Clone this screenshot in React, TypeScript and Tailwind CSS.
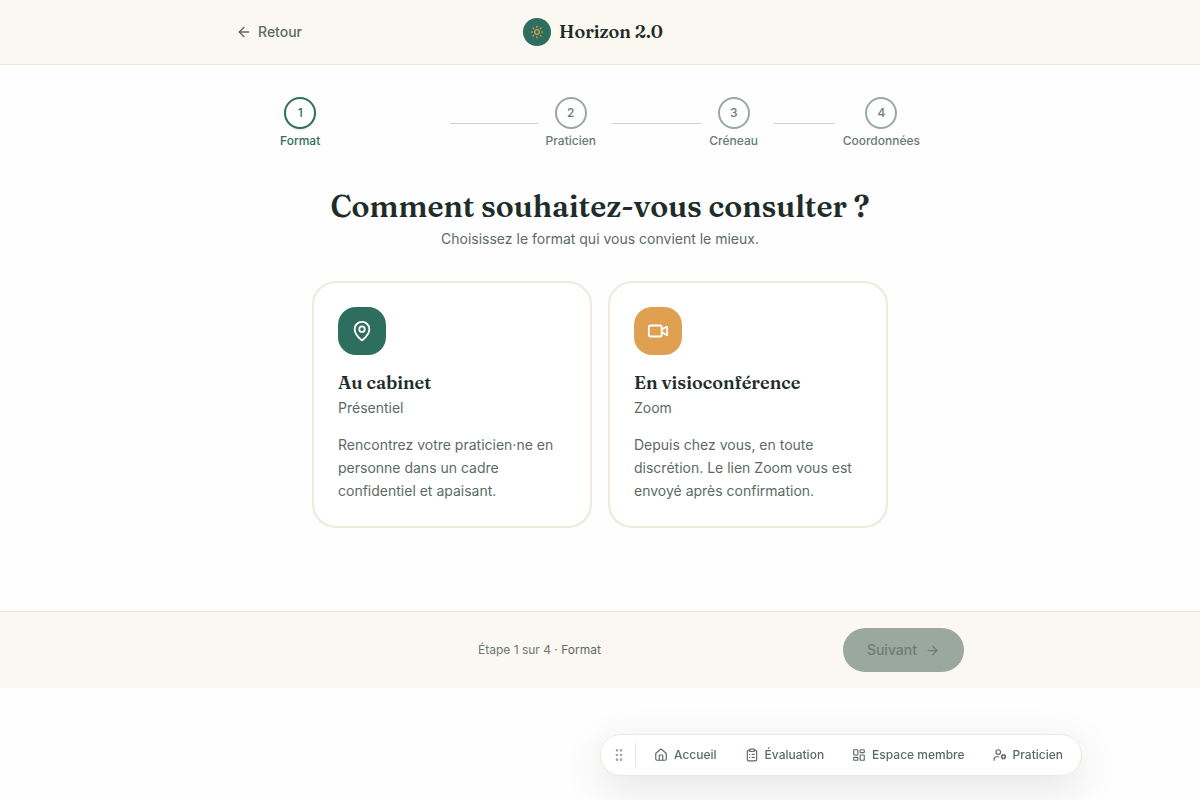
import {
  ArrowLeft,
  ArrowRight,
  ClipboardList,
  GripVertical,
  House,
  LayoutDashboard,
  MapPin,
  Sun,
  UserCog,
  Video,
} from "lucide-react";

const steps = ["Format", "Praticien", "Créneau", "Coordonnées"];

const formats = [
  {
    title: "Au cabinet",
    subtitle: "Présentiel",
    text: "Rencontrez votre praticien·ne en personne dans un cadre confidentiel et apaisant.",
    icon: MapPin,
    color: "bg-[#2d6e5e]",
  },
  {
    title: "En visioconférence",
    subtitle: "Zoom",
    text: "Depuis chez vous, en toute discrétion. Le lien Zoom vous est envoyé après confirmation.",
    icon: Video,
    color: "bg-[#e0a052]",
  },
];

const links = [
  { label: "Accueil", icon: House },
  { label: "Évaluation", icon: ClipboardList },
  { label: "Espace membre", icon: LayoutDashboard },
  { label: "Praticien", icon: UserCog },
];

const Header = () => (
  <header className="border-b border-[#efe6d6] bg-[#fbf8f1]">
    <div className="mx-auto flex h-16 max-w-3xl items-center justify-between px-5">
      <a
        href="#"
        className="flex items-center gap-1.5 text-sm font-medium text-[#5c6b64]"
      >
        <ArrowLeft size={16} />
        Retour
      </a>
      <div className="flex items-center gap-2">
        <span className="flex size-7 items-center justify-center rounded-full bg-[#2d6e5e] text-[#e0a052]">
          <Sun size={14} />
        </span>
        <span className="font-['Fraunces','Liberation_Serif',serif] text-lg font-semibold text-[#1f2d2a]">
          Horizon 2.0
        </span>
      </div>
      <span className="w-20" />
    </div>
  </header>
);

const Stepper = () => (
  <ol className="mx-auto flex max-w-2xl items-center gap-2 px-4 text-xs font-medium">
    {steps.map((step, i) => (
      <li key={step} className="flex flex-1 items-center">
        {i > 0 && <span className="mx-2 h-px flex-1 bg-[#cdd3c8]" />}
        <div
          className={
            i === 0
              ? "flex flex-col items-center gap-1 text-[#2d6e5e]"
              : "flex flex-col items-center gap-1 text-[#6b7a73]"
          }
        >
          <span
            className={
              i === 0
                ? "flex size-8 items-center justify-center rounded-full border-2 border-[#2d6e5e] bg-white shadow-sm"
                : "flex size-8 items-center justify-center rounded-full border-2 border-[#9aa8a0] bg-white"
            }
          >
            {i + 1}
          </span>
          <span>{step}</span>
        </div>
      </li>
    ))}
  </ol>
);

const FormatCards = () => (
  <div className="mx-auto mt-8 grid max-w-xl grid-cols-2 gap-4">
    {formats.map(({ title, subtitle, text, icon: Icon, color }) => (
      <button
        key={title}
        type="button"
        className="rounded-3xl border-2 border-[#efe9dc] bg-white p-6 text-left"
      >
        <span
          className={`flex size-12 items-center justify-center rounded-[18px] text-white ${color}`}
        >
          <Icon size={22} />
        </span>
        <h2 className="mt-4 font-['Fraunces','Liberation_Serif',serif] text-lg leading-[23px] font-semibold text-[#1f2d2a]">
          {title}
        </h2>
        <p className="mt-1 text-sm text-[#5c6b64]">{subtitle}</p>
        <p className="mt-4 text-sm leading-relaxed text-[#5c6b64]">{text}</p>
      </button>
    ))}
  </div>
);

const Footer = () => (
  <footer className="border-t border-[#e8e6dd] bg-[#fbf7f2]">
    <div className="mx-auto flex max-w-3xl items-center justify-between px-5 py-4">
      <span />
      <p className="text-xs text-[#6b7a73]">
        Étape 1 sur 4 · <span className="text-[#5c6b64]">Format</span>
      </p>
      <button
        type="button"
        disabled
        className="flex h-11 items-center gap-2 rounded-full bg-[#9aa89f] px-6 text-sm font-medium text-[#6b7d74]"
      >
        Suivant
        <ArrowRight size={15} />
      </button>
    </div>
  </footer>
);

const QuickNav = () => (
  <nav className="fixed bottom-6 left-1/2 flex h-[42px] items-center rounded-full border border-[#efe9dc] bg-white px-1 text-xs font-medium text-[#5c6b64] shadow-[0_12px_40px_rgba(31,45,42,0.12)]">
    <button
      type="button"
      aria-label="Déplacer"
      className="flex w-7 items-center justify-center text-[#9aa8a0]"
    >
      <GripVertical size={16} />
    </button>
    <span className="mr-1 ml-0.5 h-6 w-px bg-[#e8e6dd]" />
    {links.map(({ label, icon: Icon }) => (
      <a
        key={label}
        href="#"
        className="flex items-center gap-1.5 px-3.5 py-1.5"
      >
        <Icon size={14} />
        {label}
      </a>
    ))}
  </nav>
);

const App = () => {
  return (
    <div className="min-h-screen bg-[#fefefe] font-['Inter',sans-serif] text-[#1f2d2a]">
      <Header />
      <main className="px-4 pt-8 pb-[83px]">
        <Stepper />
        <h1 className="mt-10 text-center font-['Fraunces','Liberation_Serif',serif] text-3xl leading-9 font-semibold">
          Comment souhaitez-vous consulter ?
        </h1>
        <p className="mt-1 text-center text-sm text-[#5c6b64]">
          Choisissez le format qui vous convient le mieux.
        </p>
        <FormatCards />
      </main>
      <Footer />
      <QuickNav />
    </div>
  );
};

export default App;
